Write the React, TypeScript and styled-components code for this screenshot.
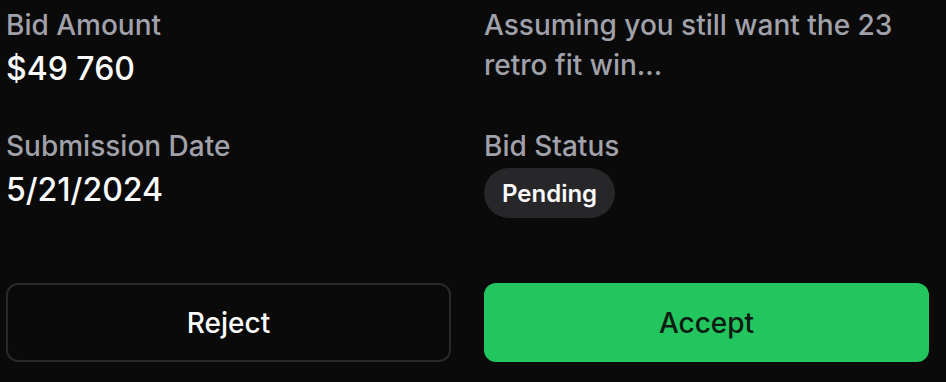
import React from "react";
import styled, { createGlobalStyle } from "styled-components";

const GlobalStyle = createGlobalStyle`
  html, body {
    margin: 0;
    padding: 0;
    background: #0a0a0a;
  }
  body {
    font-family: Inter, "Noto Sans", sans-serif;
    -webkit-font-smoothing: antialiased;
  }
`;

const Card = styled.div`
  width: 946px;
  height: 382px;
  box-sizing: border-box;
  padding: 5px 17px 0 6px;
  background: #0a0a0a;
  display: flex;
  flex-direction: column;
`;

const Grid = styled.div`
  display: grid;
  grid-template-columns: 1fr 1fr;
  column-gap: 33px;
  row-gap: 33px;
`;

const Field = styled.div`
  display: flex;
  flex-direction: column;
  min-width: 0;
`;

const Label = styled.div`
  font-size: 28px;
  line-height: 40px;
  font-weight: 500;
  color: #a1a1aa;
`;

const Value = styled.div`
  font-size: 32px;
  line-height: 48px;
  font-weight: 500;
  color: #fafafa;
`;

const Description = styled.div`
  font-size: 28px;
  line-height: 40px;
  font-weight: 500;
  color: #a1a1aa;
`;

const Badge = styled.span`
  align-self: flex-start;
  display: inline-flex;
  align-items: center;
  margin-top: 2px;
  height: 50px;
  padding: 0 18px;
  border-radius: 25px;
  background: #27272a;
  color: #fafafa;
  font-size: 24px;
  font-weight: 600;
`;

const Actions = styled.div`
  margin-top: 65px;
  display: grid;
  grid-template-columns: 1fr 1fr;
  column-gap: 33px;
`;

const Button = styled.button<{ $primary?: boolean }>`
  height: 79px;
  border-radius: 12px;
  font-family: Inter, "Noto Sans", sans-serif;
  font-size: 28px;
  font-weight: 500;
  cursor: pointer;
  border: 2px solid ${(p) => (p.$primary ? "#22c55e" : "#262a28")};
  background: ${(p) => (p.$primary ? "#22c55e" : "#0a0a0a")};
  color: ${(p) => (p.$primary ? "#0f1a12" : "#fafafa")};
`;

export default function App() {
  return (
    <>
      <GlobalStyle />
      <Card>
        <Grid>
          <Field>
            <Label>Bid Amount</Label>
            <Value>$49 760</Value>
          </Field>
          <Field>
            <Description>
              Assuming you still want the 23
              <br />
              retro fit win...
            </Description>
          </Field>
          <Field>
            <Label>Submission Date</Label>
            <Value>5/21/2024</Value>
          </Field>
          <Field>
            <Label>Bid Status</Label>
            <Badge>Pending</Badge>
          </Field>
        </Grid>
        <Actions>
          <Button>Reject</Button>
          <Button $primary>Accept</Button>
        </Actions>
      </Card>
    </>
  );
}
